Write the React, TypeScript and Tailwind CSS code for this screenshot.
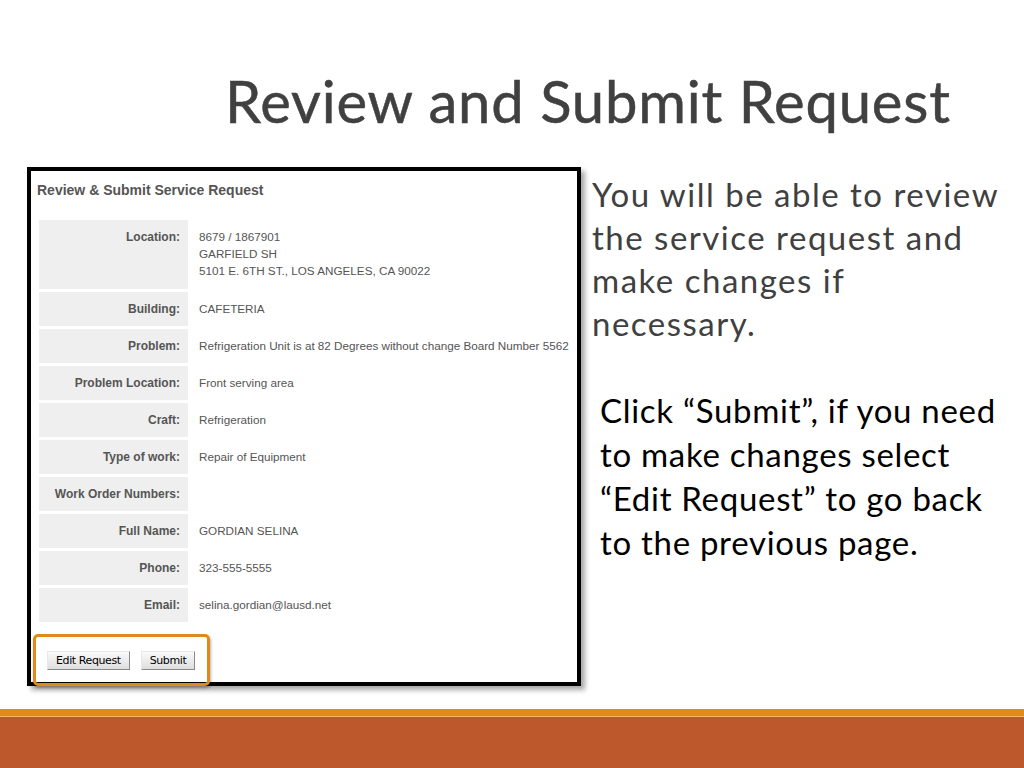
import React from 'react';

const rows: { label: string; value: string[] }[] = [
  { label: 'Location:', value: ['8679 / 1867901', 'GARFIELD SH', '5101 E. 6TH ST., LOS ANGELES, CA 90022'] },
  { label: 'Building:', value: ['CAFETERIA'] },
  { label: 'Problem:', value: ['Refrigeration Unit is at 82 Degrees without change Board Number 5562'] },
  { label: 'Problem Location:', value: ['Front serving area'] },
  { label: 'Craft:', value: ['Refrigeration'] },
  { label: 'Type of work:', value: ['Repair of Equipment'] },
  { label: 'Work Order Numbers:', value: [] },
  { label: 'Full Name:', value: ['GORDIAN SELINA'] },
  { label: 'Phone:', value: ['323-555-5555'] },
  { label: 'Email:', value: ['selina.gordian@lausd.net'] },
];

function FormButton({ children }: { children: React.ReactNode }) {
  return (
    <button className="h-[19px] px-[8px] text-[11px] leading-none text-black bg-gradient-to-b from-[#fafafa] to-[#dedede] border border-t-[#e8e8e8] border-l-[#e8e8e8] border-r-[#8a8a8a] border-b-[#8a8a8a] [font-family:'DejaVu_Sans',sans-serif] tracking-[-0.4px]">
      {children}
    </button>
  );
}

export default function App() {
  return (
    <div className="w-[1024px] h-[768px] bg-white flex flex-col overflow-hidden">
      <h1 className="pl-[225px] pt-[68px] h-[167px] text-[58px] leading-[66px] text-[#404040] [font-family:Lato,sans-serif] tracking-[0.8px] [-webkit-text-stroke:0.5px_#404040]">
        Review and Submit Request
      </h1>

      <div className="flex">
        <div className="ml-[27px] w-[554px] h-[519px] border-[4px] border-black bg-white shadow-[4px_4px_5px_rgba(0,0,0,0.35)] relative flex flex-col [font-family:'Liberation_Sans',Arial,sans-serif]">
          <div className="pl-[6px] pt-[11px] h-[49px] text-[14px] leading-[16px] font-bold text-[#555]">
            Review &amp; Submit Service Request
          </div>
          <div className="ml-[8px] grid grid-cols-[149px_1fr] gap-[3px] text-[12px] leading-[17px] text-[#555]">
            {rows.map((r) => (
              <React.Fragment key={r.label}>
                <div className={`bg-[#efefef] text-right font-bold pr-[8px] pt-[8.5px] ${r.value.length > 1 ? 'h-[69px]' : 'h-[34px]'}`}>
                  {r.label}
                </div>
                <div className="pl-[8px] pt-[8px] text-[11.7px] whitespace-nowrap">
                  {r.value.map((v) => (
                    <div key={v}>{v}</div>
                  ))}
                </div>
              </React.Fragment>
            ))}
          </div>
          <div className="flex gap-[11px] pl-[16px] mt-[29px]">
            <FormButton>Edit Request</FormButton>
            <FormButton>Submit</FormButton>
          </div>
          <div className="absolute left-[2px] top-[463px] w-[177px] h-[52px] border-[3px] border-[#e08a1e] rounded-[5px] shadow-[1px_2px_3px_rgba(0,0,0,0.3)]" />
        </div>

        <div className="flex flex-col [font-family:Lato,sans-serif] text-[33px]">
          <p className="ml-[11px] mt-[6px] w-[422px] leading-[43px] tracking-[1.5px] text-[#404040]">
            You will be able to review the service request and make changes if necessary.
          </p>
          <p className="ml-[19px] mt-[43px] w-[414px] leading-[44px] tracking-[0.7px] text-black">
            Click “Submit”, if you need to make changes select “Edit Request” to go back to the previous page.
          </p>
        </div>
      </div>

      <div className="mt-auto">
        <div className="h-[7px] bg-[#e3891b]" />
        <div className="h-[1px] bg-[#f7b46a]" />
        <div className="h-[51px] bg-[#bd582c]" />
      </div>
    </div>
  );
}
